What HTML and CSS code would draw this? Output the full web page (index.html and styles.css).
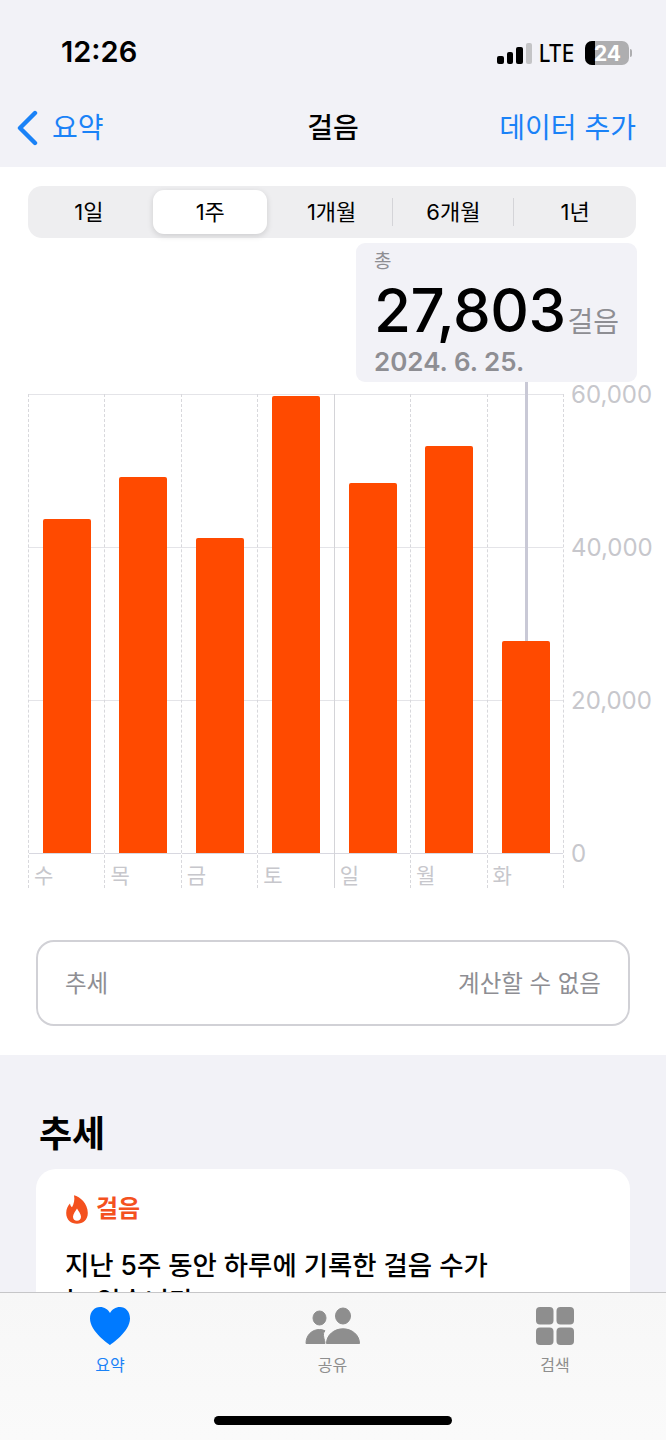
FILE: index.html
```html
<!DOCTYPE html>
<html lang="ko">
<head>
  <meta charset="UTF-8">
  <meta name="viewport" content="width=device-width, initial-scale=1.0">
  <title>걸음</title>
  <link rel="stylesheet" href="styles.css">
</head>
<body>
  <div class="phone">
    <!-- Status bar -->
    <div class="status-bar">
      <span class="clock">12:26</span>
      <div class="status-icons">
        <div class="signal">
          <span class="signal-bar on s1"></span>
          <span class="signal-bar on s2"></span>
          <span class="signal-bar on s3"></span>
          <span class="signal-bar s4"></span>
        </div>
        <span class="network">LTE</span>
        <div class="battery">
          <span class="battery-fill"></span>
          <span class="battery-level">24</span>
        </div>
        <span class="battery-cap"></span>
      </div>
    </div>

    <!-- Navigation -->
    <header class="nav-bar">
      <a class="nav-back">
        <svg class="back-icon" width="22" height="36" viewBox="0 0 22 36"><path d="M19 3 L4 18 L19 33" fill="none" stroke="#1a82f7" stroke-width="4.4" stroke-linecap="round" stroke-linejoin="round"/></svg>
        <span>요약</span>
      </a>
      <h1 class="nav-title">걸음</h1>
      <a class="nav-action">데이터 추가</a>
    </header>

    <main>
      <section class="chart-section">
        <div class="segments">
          <span class="segment">1일</span>
          <span class="segment selected">1주</span>
          <span class="segment">1개월</span>
          <span class="segment divided">6개월</span>
          <span class="segment divided">1년</span>
        </div>

        <!-- Selected day callout -->
        <div class="callout">
          <div class="callout-label">총</div>
          <div class="callout-value"><span class="callout-number">27,803</span><span class="callout-unit">걸음</span></div>
          <div class="callout-date">2024. 6. 25.</div>
        </div>
        <div class="callout-line"></div>

        <div class="chart">
          <div class="plot">
            <div class="grid-line top"></div>
            <div class="grid-line upper"></div>
            <div class="grid-line lower"></div>
            <div class="day"><div class="bar-area"><div class="bar" style="height: 334px"></div></div><span class="day-label">수</span></div>
            <div class="day"><div class="bar-area"><div class="bar" style="height: 376px"></div></div><span class="day-label">목</span></div>
            <div class="day"><div class="bar-area"><div class="bar" style="height: 315px"></div></div><span class="day-label">금</span></div>
            <div class="day"><div class="bar-area"><div class="bar" style="height: 457px"></div></div><span class="day-label">토</span></div>
            <div class="day week-start"><div class="bar-area"><div class="bar" style="height: 370px"></div></div><span class="day-label">일</span></div>
            <div class="day"><div class="bar-area"><div class="bar" style="height: 407px"></div></div><span class="day-label">월</span></div>
            <div class="day"><div class="bar-area"><div class="bar" style="height: 212px"></div></div><span class="day-label">화</span></div>
          </div>
          <div class="y-axis">
            <span>60,000</span>
            <span>40,000</span>
            <span>20,000</span>
            <span>0</span>
          </div>
        </div>

        <div class="trend-row">
          <span>추세</span>
          <span>계산할 수 없음</span>
        </div>
      </section>

      <section class="trends-section">
        <h2>추세</h2>
        <div class="trend-card">
          <div class="trend-card-title">
            <svg width="22" height="29" viewBox="0 0 22 29"><path fill-rule="evenodd" fill="#f4511e" d="M8 0.200 C14 1.500 21.800 8.500 21.800 18 C21.800 24.800 17 28.800 11 28.800 C5 28.800 0.200 24.800 0.200 18 C0.200 14 2 10.500 4 8.500 C4.300 10.300 4.800 11.500 6 12.300 C7.800 9 9 5 8 0.200 Z M11 13.500 C9.600 16.300 7 18.800 7 21.800 C7 24.300 8.800 25.800 11 25.800 C13.200 25.800 15 24.300 15 21.800 C15 18.800 12.400 16.300 11 13.500 Z"/></svg>
            <span>걸음</span>
          </div>
          <p>지난 5주 동안 하루에 기록한 걸음 수가<br>늘 있습니다</p>
        </div>
      </section>
    </main>

    <!-- Tab bar -->
    <nav class="tab-bar">
      <div class="tabs">
        <a class="tab active">
          <svg width="42" height="38" viewBox="0 0 42 38"><path fill="#007aff" d="M21 38 C19.500 37 1 24.500 1 11.500 C1 4.500 5.500 0 11 0 C15.500 0 19 2.500 21 6 C23 2.500 26.500 0 31 0 C36.500 0 41 4.500 41 11.500 C41 24.500 22.500 37 21 38 Z"/></svg>
          <span>요약</span>
        </a>
        <a class="tab">
          <svg width="56" height="38" viewBox="0 0 56 38"><g fill="#8e8e8e" stroke="#8e8e8e" stroke-width="1" stroke-linejoin="round"><ellipse cx="14.500" cy="11" rx="6.500" ry="7"/><ellipse cx="38" cy="9" rx="7.500" ry="8"/><path d="M1 36.500 C1 28 7 22.500 14.500 22.500 C16.500 22.500 18.500 23 20 23.800 C16.500 27 20 33 20 36.500 Z"/><path d="M21.500 36.500 C21.500 28 29 21.800 38 21.800 C47 21.800 54.500 28 54.500 36.500 Z"/></g></svg>
          <span>공유</span>
        </a>
        <a class="tab">
          <svg width="38" height="38" viewBox="0 0 38 38"><g fill="#8e8e8e"><rect x="0" y="0" width="17.500" height="17.500" rx="4"/><rect x="20.500" y="0" width="17.500" height="17.500" rx="4"/><rect x="0" y="20.500" width="17.500" height="17.500" rx="4"/><rect x="20.500" y="20.500" width="17.500" height="17.500" rx="4"/></g></svg>
          <span>검색</span>
        </a>
      </div>
      <div class="home-indicator"></div>
    </nav>
  </div>
</body>
</html>
```

FILE: styles.css
```css
/* General styles */
* {
  box-sizing: border-box;
}

body {
  margin: 0;
  font-family: Inter, "Noto Sans CJK KR", sans-serif;
  background-color: #f2f2f7;
  color: #000;
}

.phone {
  position: relative;
  width: 666px;
  height: 1440px;
  overflow: hidden;
}

/* Status bar */
.status-bar {
  height: 94px;
  padding: 32px 34px 0 61px;
  display: flex;
  justify-content: space-between;
  align-items: flex-start;
}

.clock {
  font-size: 29px;
  font-weight: 600;
  line-height: 40px;
}

.status-icons {
  display: flex;
  align-items: center;
  height: 42px;
}

.signal {
  display: flex;
  align-items: flex-end;
  gap: 3px;
  height: 21px;
}

.signal-bar {
  width: 6.5px;
  border-radius: 2px;
  background-color: #c4c4c6;
}

.signal-bar.on { background-color: #000; }
.s1 { height: 8px; }
.s2 { height: 12px; }
.s3 { height: 17px; }
.s4 { height: 21px; }

.network {
  margin-left: 7px;
  width: 46px;
  font-size: 24px;
  font-weight: 500;
  transform: scaleX(0.85);
  transform-origin: left center;
}

.battery {
  position: relative;
  width: 44px;
  height: 24px;
  border-radius: 7px;
  background-color: #aeaeb0;
  overflow: hidden;
  display: flex;
  align-items: center;
  justify-content: flex-end;
  padding-right: 8px;
}

.battery-fill {
  position: absolute;
  left: 0;
  top: 0;
  bottom: 0;
  width: 10px;
  background-color: #000;
}

.battery-level {
  position: relative;
  color: #fff;
  font-size: 21px;
  font-weight: 700;
}

.battery-cap {
  width: 2px;
  height: 8px;
  margin-left: 1px;
  border-radius: 0 2px 2px 0;
  background-color: #aeaeb0;
}

/* Navigation */
.nav-bar {
  height: 73px;
  padding: 0 30px 0 16px;
  display: flex;
  align-items: flex-start;
  justify-content: space-between;
  position: relative;
}

.nav-back,
.nav-action {
  color: #1a82f7;
  font-size: 28px;
  line-height: 40px;
  display: flex;
  align-items: center;
  gap: 14px;
  margin-top: 14px;
}

.nav-title {
  position: absolute;
  left: 0;
  right: 0;
  top: 14px;
  margin: 0;
  text-align: center;
  font-size: 28px;
  font-weight: 500;
  line-height: 40px;
}

/* Chart section */
.chart-section {
  position: relative;
  height: 888px;
  padding: 19px 30px 0 28px;
  background-color: #fff;
}

.segments {
  width: 608px;
  height: 52px;
  padding: 4px 0;
  display: flex;
  border-radius: 14px;
  background-color: #eeeef0;
}

.segment {
  flex: 1;
  position: relative;
  display: flex;
  align-items: center;
  justify-content: center;
  padding-bottom: 4px;
  font-size: 22px;
}

.segment.selected {
  flex: none;
  width: 114px;
  margin: 0 3.5px;
  border-radius: 11px;
  background-color: #fff;
  box-shadow: 0 2px 6px rgba(0, 0, 0, 0.14);
}

.segment.divided::before {
  content: "";
  position: absolute;
  left: -1px;
  top: 8px;
  bottom: 8px;
  width: 1px;
  background-color: #d4d4d8;
}

.callout {
  position: absolute;
  left: 356px;
  top: 76px;
  width: 281px;
  height: 139px;
  padding: 6px 0 6px 18px;
  border-radius: 9px;
  background-color: #f2f2f7;
  z-index: 2;
}

.callout-label {
  font-size: 19px;
  line-height: 26px;
  color: #8e8e93;
}

.callout-value {
  display: flex;
  align-items: baseline;
  height: 68px;
  margin-top: 1px;
  white-space: nowrap;
}

.callout-number {
  font-size: 60px;
  font-weight: 500;
  line-height: 68px;
  letter-spacing: -0.5px;
}

.callout-unit {
  margin-left: 2px;
  font-size: 28px;
  color: #8e8e93;
}

.callout-date {
  font-size: 26px;
  font-weight: 600;
  line-height: 36px;
  color: #8e8e93;
}

.callout-line {
  position: absolute;
  left: 525px;
  top: 215px;
  width: 3px;
  height: 259px;
  background-color: #c9c9d6;
  z-index: 1;
}

/* Chart */
.chart {
  display: flex;
  margin-top: 156px;
}

.plot {
  position: relative;
  width: 536px;
  height: 494px;
  display: flex;
  border-right: 1px dashed #d8d8dc;
}

.grid-line {
  position: absolute;
  left: 0;
  right: 0;
  height: 1px;
  background-color: #e4e4e8;
}

.grid-line.top { top: 0; }
.grid-line.upper { top: 153px; }
.grid-line.lower { top: 306px; }

.day {
  position: relative;
  flex: 1;
  min-width: 0;
  display: flex;
  flex-direction: column;
  border-left: 1px dashed #d8d8dc;
}

.day.week-start {
  border-left: 1px solid #d4d4d8;
}

.bar-area {
  flex: none;
  height: 460px;
  padding: 0 14px;
  display: flex;
  align-items: flex-end;
  border-bottom: 1px solid #d8d8e0;
}

.bar {
  width: 48px;
  flex: none;
  border-radius: 2px 2px 0 0;
  background-color: #ff4a00;
}

.day-label {
  padding: 11px 0 0 5px;
  font-size: 21px;
  line-height: 22px;
  color: #c7c7cc;
}

.y-axis {
  height: 460px;
  margin-left: 7px;
  display: flex;
  flex-direction: column;
  justify-content: space-between;
  font-size: 24px;
  line-height: 1;
  color: #c7c7cc;
}

.y-axis span {
  height: 1px;
  display: flex;
  align-items: center;
}

/* Trend row */
.trend-row {
  margin: 52px 0 0 8px;
  width: 594px;
  height: 86px;
  padding: 0 27px 3px;
  display: flex;
  justify-content: space-between;
  align-items: center;
  border: 2px solid #d1d1d6;
  border-radius: 18px;
  font-size: 23.5px;
  color: #8e8e93;
}

/* Trends section */
.trends-section {
  padding: 57px 36px 0;
}

.trends-section h2 {
  margin: 0 0 12px 3px;
  font-size: 36px;
  font-weight: 700;
  line-height: 45px;
}

.trend-card {
  height: 240px;
  padding: 22px 30px;
  border-radius: 20px;
  background-color: #fff;
}

.trend-card-title {
  display: flex;
  align-items: center;
  gap: 8px;
  font-size: 24px;
  font-weight: 600;
  line-height: 36px;
  color: #f4511e;
}

.trend-card p {
  margin: 20px 0 0 -1px;
  font-size: 26.4px;
  line-height: 36px;
  font-weight: 500;
}

/* Tab bar */
.tab-bar {
  position: absolute;
  left: 0;
  right: 0;
  bottom: 0;
  height: 148px;
  border-top: 1px solid #c6c6c8;
  background: linear-gradient(#f7f7f7, #fafafa);
}

.tabs {
  display: flex;
  justify-content: space-between;
  padding: 14px 71px 0 70px;
}

.tab {
  width: 80px;
  display: flex;
  flex-direction: column;
  align-items: center;
  gap: 9px;
  font-size: 16px;
  line-height: 22px;
  color: #8e8e8e;
}

.tab.active {
  color: #1a82f7;
}

.home-indicator {
  position: absolute;
  left: 214px;
  bottom: 15px;
  width: 238px;
  height: 9px;
  border-radius: 5px;
  background-color: #000;
}
```
